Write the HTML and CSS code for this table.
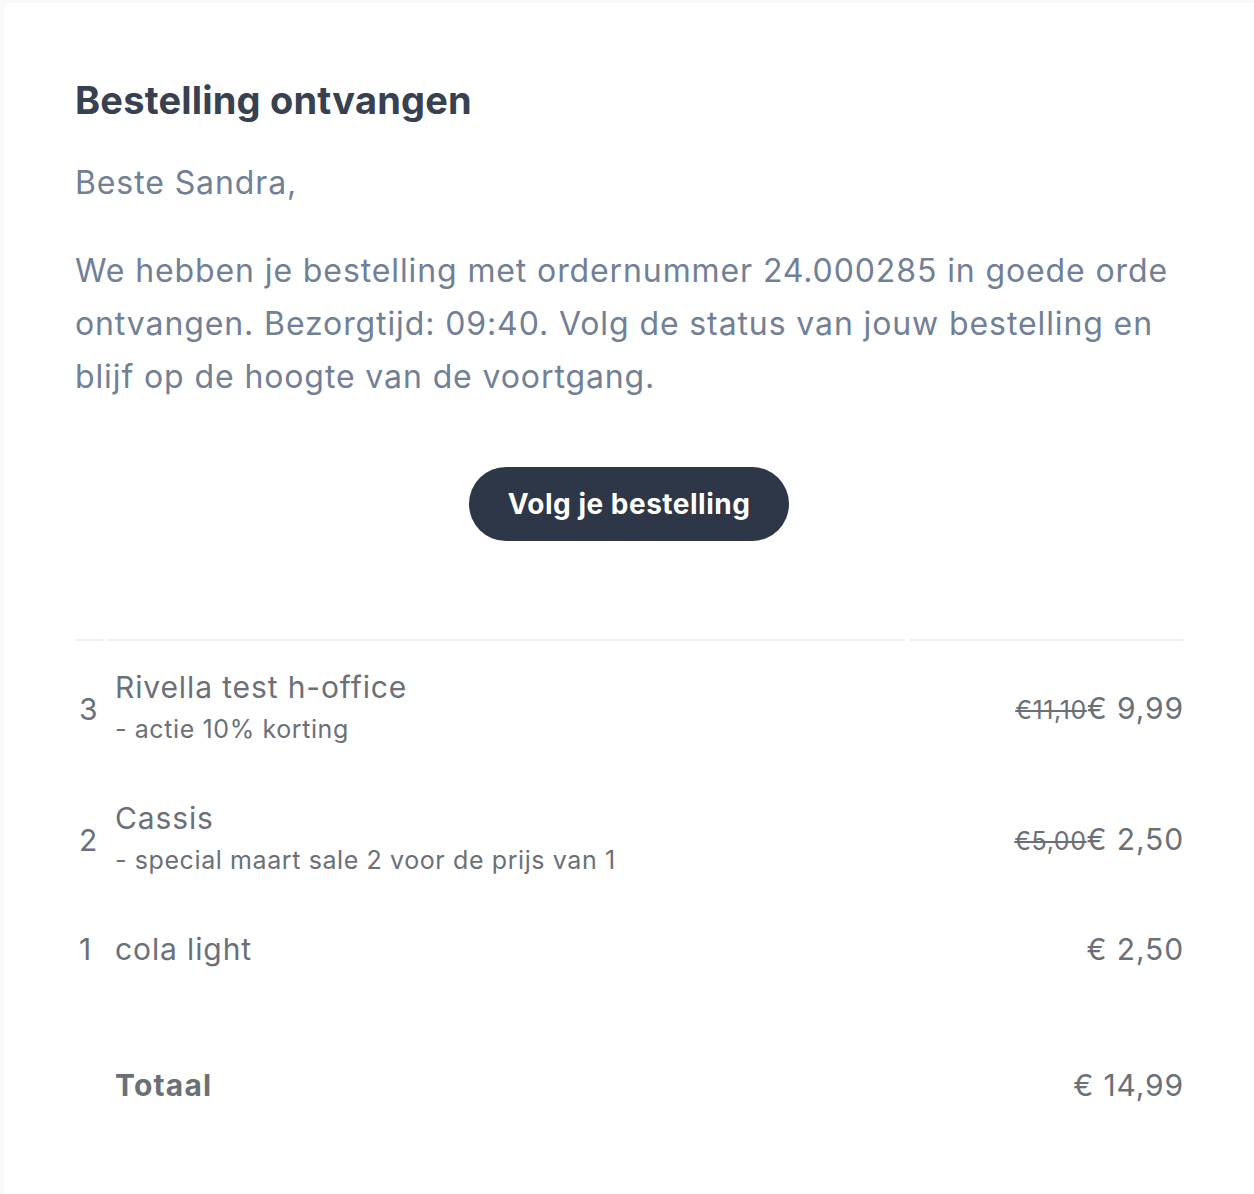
FILE: index.html
```html
<!DOCTYPE html>
<html lang="nl">
<head>
<meta charset="utf-8">
<title>Bestelling ontvangen</title>
<link rel="stylesheet" href="styles.css">
</head>
<body>
<div class="card">
  <h1 class="title">Bestelling ontvangen</h1>
  <p class="greeting">Beste Sandra,</p>
  <p class="intro">We hebben je bestelling met ordernummer 24.000285 in goede orde ontvangen. Bezorgtijd: 09:40. Volg de status van jouw bestelling en blijf op de hoogte van de voortgang.</p>
  <div class="cta-wrap"><a class="cta" href="#">Volg je bestelling</a></div>

  <div class="order">
    <div class="row head"><div class="cell"></div><div class="cell"></div><div class="cell"></div></div>
    <div class="row item">
      <div class="qty">3</div>
      <div class="desc"><div class="name">Rivella test h-office</div><div class="note">- actie 10% korting</div></div>
      <div class="price"><s class="old">€11,10</s>€ 9,99</div>
    </div>
    <div class="row item">
      <div class="qty">2</div>
      <div class="desc"><div class="name">Cassis</div><div class="note">- special maart sale 2 voor de prijs van 1</div></div>
      <div class="price"><s class="old">€5,00</s>€ 2,50</div>
    </div>
    <div class="row item">
      <div class="qty">1</div>
      <div class="desc"><div class="name">cola light</div></div>
      <div class="price">€ 2,50</div>
    </div>
    <div class="row total">
      <div class="qty"></div>
      <div class="desc"><div class="total-label">Totaal</div></div>
      <div class="price">€ 14,99</div>
    </div>
  </div>
</div>
</body>
</html>
```
FILE: styles.css
```css
html, body {
  margin: 0;
  padding: 0;
}
body {
  background: #f9f9f9;
  font-family: Inter, "Noto Sans", "Liberation Sans", sans-serif;
  padding: 3px 0 0 4px;
}
.card {
  box-sizing: border-box;
  background: #ffffff;
  border-top-left-radius: 6px;
  padding: 73px 71px 60px 71px;
  min-height: 1191px;
}
.title {
  margin: 0;
  font-size: 38px;
  line-height: 48px;
  font-weight: 700;
  letter-spacing: 0.2px;
  color: #374151;
}
.greeting {
  margin: 32px 0 0;
  font-size: 32px;
  line-height: 53px;
  letter-spacing: 0.89px;
  color: #718096;
}
.intro {
  margin: 35px 0 0;
  font-size: 32px;
  line-height: 53px;
  letter-spacing: 0.89px;
  color: #718096;
}
.cta-wrap {
  display: flex;
  justify-content: center;
  margin-top: 64px;
}
.cta {
  display: inline-flex;
  align-items: center;
  justify-content: center;
  height: 74px;
  width: 320px;
  border-radius: 37px;
  background: #2d3748;
  color: #ffffff;
  font-size: 28px;
  font-weight: 700;
  letter-spacing: 0.5px;
  text-decoration: none;
}
.order {
  margin: 98px 0 0 1px;
  color: #6b7078;
  letter-spacing: 0.88px;
}
.row {
  display: grid;
  grid-template-columns: 27px 1fr 274px;
  column-gap: 4px;
  align-items: center;
}
.head .cell {
  border-top: 2px solid #eef0f3;
  height: 0;
}
.item {
  padding: 26px 0 21px;
}
.qty {
  font-size: 30px;
  padding-left: 3px;
}
.desc {
  padding-left: 8px;
}
.name {
  font-size: 30px;
  line-height: 40px;
}
.note {
  font-size: 25px;
  line-height: 44px;
  letter-spacing: 0.6px;
}
.price {
  text-align: right;
  font-size: 30px;
  line-height: 40px;
  margin-right: -1px;
}
.old {
  font-size: 25px;
  letter-spacing: 0.6px;
}
.total {
  padding-top: 75px;
}
.total-label {
  font-size: 30px;
  font-weight: 700;
  line-height: 40px;
  letter-spacing: 1.2px;
}
```
